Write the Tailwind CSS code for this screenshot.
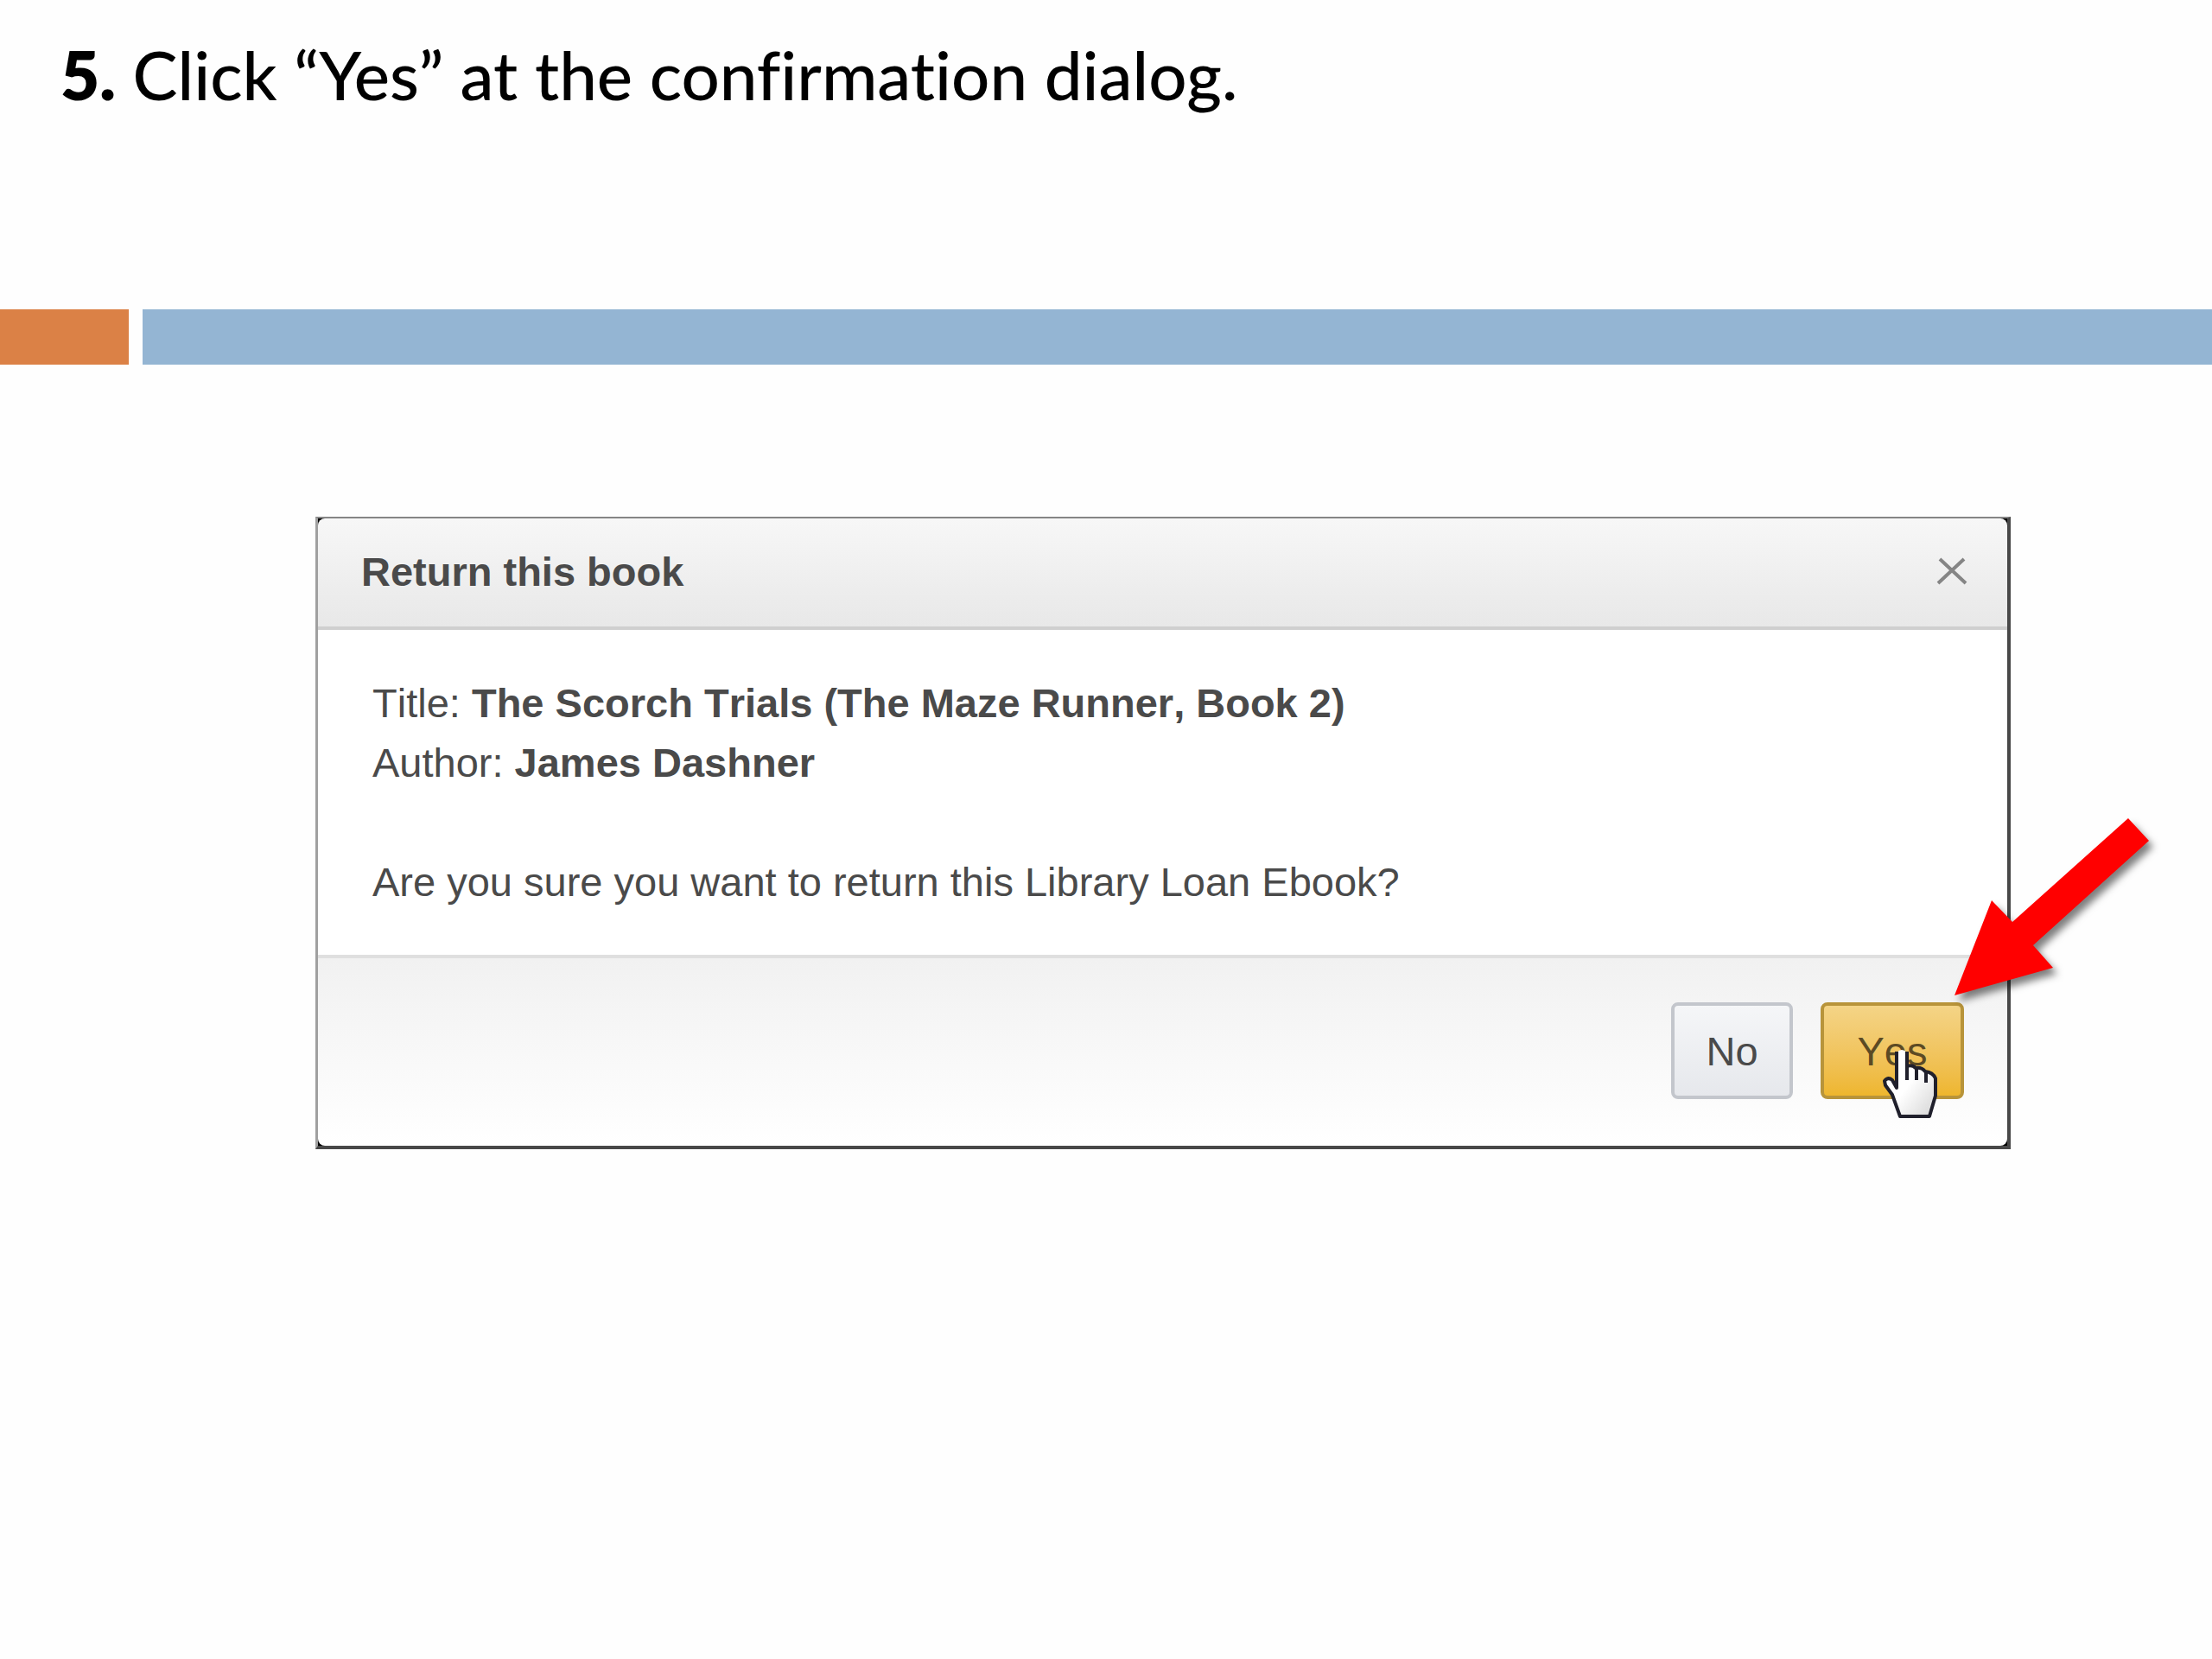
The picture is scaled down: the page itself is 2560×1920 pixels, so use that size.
<!DOCTYPE html>
<html lang="en">
<head>
    <meta charset="UTF-8">
    <meta name="viewport" content="width=device-width, initial-scale=1.0">
    <title>Return a Library Loan Ebook - Step 5</title>
    <script src="https://cdn.jsdelivr.net/npm/@tailwindcss/browser@4"></script>
</head>
<body class="bg-[#fefefe] min-h-screen overflow-x-hidden">
    <!-- Step heading -->
    <header class="h-[358px] pl-[70px] pt-[38px]">
        <h1 class="font-['Lato',sans-serif] font-medium text-[78px] leading-[96px] text-black [font-variant-ligatures:none]"><b class="font-extrabold">5.</b> Click “Yes” at the confirmation dialog.</h1>
    </header>

    <!-- Divider -->
    <div class="flex gap-4 h-16">
        <div class="w-[149px] bg-[#db8146]"></div>
        <div class="flex-1 bg-[#94b5d3]"></div>
    </div>

    <main class="pt-[176px] pl-[365px] pr-[233px]">
        <!-- Dialog -->
        <section role="dialog" aria-labelledby="dialog-title" class="relative bg-black border-t-2 border-l-3 border-r-4 border-b-4 border-t-[#858585] border-l-[#a0a0a0] border-r-[#484848] border-b-[#484848] font-['Liberation_Sans',Arial,sans-serif] text-[47px] leading-[69px] text-[#4a4a4a] [font-kerning:none]">
            <div class="flex items-center justify-between h-[129px] pb-[3px] pl-[50px] pr-[42px] rounded-t-lg border-b-4 border-[#cfcfcf] bg-linear-to-b from-[#f7f7f7] to-[#e8e8e8]">
                <h2 id="dialog-title" class="font-bold">Return this book</h2>
                <button type="button" aria-label="Close" class="p-1">
                    <svg class="w-9 h-8" viewBox="0 0 36 32" fill="none" stroke="#858585" stroke-width="4">
                        <path d="M2 30L32 2M4 2L34 30"/>
                    </svg>
                </button>
            </div>

            <div class="bg-white pl-[63px] pr-[50px] py-[50px]">
                <p>Title: <b>The Scorch Trials (The Maze Runner, Book 2)</b></p>
                <p>Author: <b>James Dashner</b></p>
                <p class="mt-[69px]">Are you sure you want to return this Library Loan Ebook?</p>
            </div>

            <div class="flex justify-end gap-8 pt-[51px] pb-[54px] pr-[50px] rounded-b-lg border-t-4 border-[#dfdfdf] bg-linear-to-b from-[#f1f1f1] to-white">
                <button type="button" class="w-[141px] h-[112px] rounded-lg border-4 border-[#c3c6cc] bg-linear-to-b from-[#f5f6f8] to-[#e6e8ec]">No</button>
                <button type="button" class="relative w-[166px] h-[112px] rounded-lg border-4 border-[#b8943a] bg-linear-to-b from-[#f4d486] to-[#eeb62d] text-[#5c4a24]">
                    Yes
                    <!-- Hand pointer -->
                    <svg class="absolute right-[25px] -bottom-[28px] w-[68px] h-[84px]" viewBox="0 0 68 84" aria-hidden="true">
                        <defs>
                            <linearGradient id="hand" x1="0" y1="0" x2="1" y2="1">
                                <stop offset="0.5" stop-color="#fff"/>
                                <stop offset="1" stop-color="#d4d4d4"/>
                            </linearGradient>
                        </defs>
                        <path d="M19 47L14 38Q9 34 5 39L6 44L14 55L23 80H57L64 56V36Q61 29 52 28Q48 23 41 24Q37 20 31 22V6Q25 0 19 6Z" fill="url(#hand)"/>
                        <path d="M19 5V47L14 38Q9 34 5 39L6 44L14 55L23 80H57L64 56V36Q61 29 52 28Q48 23 41 24Q37 20 31 22V5" fill="none" stroke="#20202c" stroke-width="4" stroke-linejoin="round"/>
                        <path d="M31 22V38M42 24V38M53 28V41" fill="none" stroke="#20202c" stroke-width="4"/>
                    </svg>
                </button>
            </div>

            <!-- Arrow to the Yes button -->
            <svg class="absolute -right-[177px] bottom-[156px] w-[240px] h-[230px] overflow-visible drop-shadow-[5px_7px_4px_rgba(0,0,0,0.5)]" viewBox="0 0 240 230" aria-hidden="true">
                <polygon points="203,7 227,33 93,154 116,180 2,212 45,102 69,127" fill="#ff0000"/>
            </svg>
        </section>
    </main>
</body>
</html>
